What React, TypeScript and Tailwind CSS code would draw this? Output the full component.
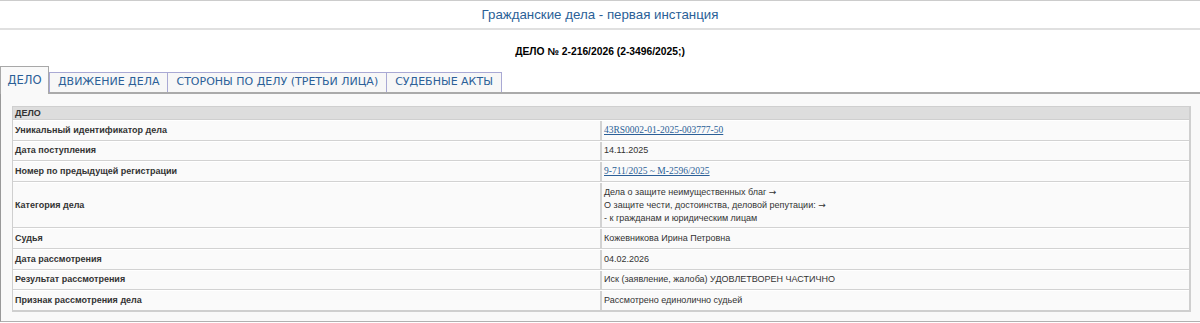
import React from "react";

const Arrow = () => <span className="font-['DejaVu_Sans',sans-serif] text-[9px]">→</span>;

const rows: { label: string; value: React.ReactNode }[] = [
  {
    label: "Уникальный идентификатор дела",
    value: (
      <a href="#" className="text-[#2b5f97] underline font-['Liberation_Serif',serif] text-[9.5px]">
        43RS0002-01-2025-003777-50
      </a>
    ),
  },
  { label: "Дата поступления", value: "14.11.2025" },
  {
    label: "Номер по предыдущей регистрации",
    value: (
      <a href="#" className="text-[#2b5f97] underline font-['Liberation_Serif',serif] text-[9.5px]">
        9-711/2025 ~ М-2596/2025
      </a>
    ),
  },
  {
    label: "Категория дела",
    value: (
      <div className="flex flex-col">
        <span>
          Дела о защите неимущественных благ <Arrow />
        </span>
        <span>
          О защите чести, достоинства, деловой репутации: <Arrow />
        </span>
        <span>- к гражданам и юридическим лицам</span>
      </div>
    ),
  },
  { label: "Судья", value: "Кожевникова Ирина Петровна" },
  { label: "Дата рассмотрения", value: "04.02.2026" },
  { label: "Результат рассмотрения", value: "Иск (заявление, жалоба) УДОВЛЕТВОРЕН ЧАСТИЧНО" },
  { label: "Признак рассмотрения дела", value: "Рассмотрено единолично судьей" },
];

export default function App() {
  return (
    <div className="w-[1200px] h-[323px] bg-white font-['Liberation_Sans',Arial,sans-serif] overflow-hidden">
      <div className="border-t border-[#cccccc] border-b-2 border-b-[#e0e0e0] h-[30px] flex items-center justify-center">
        <span className="text-[13.3px] text-[#2b5f97] leading-[16px]">Гражданские дела - первая инстанция</span>
      </div>
      <div className="h-[36px] flex items-center justify-center">
        <span className="text-[10.3px] font-bold text-black leading-[13px] mt-[7px]">ДЕЛО № 2-216/2026 (2-3496/2025;)</span>
      </div>
      <div className="flex items-end h-[26px] font-['DejaVu_Sans',Verdana,sans-serif] text-[11px] text-[#2b5f97]">
        <div className="relative z-10 h-[28px] -mb-[2px] w-[49px] bg-[#f9f9f9] border-l border-t border-r border-[#a8a8a8] flex items-start pt-[5px] justify-center text-[11.6px]">
          ДЕЛО
        </div>
        <div className="h-[20px] px-[8px] bg-[#f7f7f7] border border-b-0 border-[#a9a9d4] flex items-center">ДВИЖЕНИЕ ДЕЛА</div>
        <div className="h-[20px] px-[8px] bg-[#f7f7f7] border border-l-0 border-b-0 border-[#a9a9d4] flex items-center">СТОРОНЫ ПО ДЕЛУ (ТРЕТЬИ ЛИЦА)</div>
        <div className="h-[20px] px-[8px] bg-[#f7f7f7] border border-l-0 border-b-0 border-[#a9a9d4] flex items-center">СУДЕБНЫЕ АКТЫ</div>
      </div>
      <div className="h-[230px] bg-[#f9f9f9] border-t-2 border-[#aaaaaa] border-l border-l-[#999999] border-b border-b-[#b0b0b0] pt-[12px] pl-[11px] pr-[9px]">
        <div className="border border-[#cfcfcf] border-r-2 border-b-2 bg-[#fafafa] text-[9px] text-[#333333]">
          <div className="bg-[#dddddd] h-[13px] leading-[13px] px-[2px] font-bold text-[#333333] border-b border-[#cfcfcf]">ДЕЛО</div>
          {rows.map((r, i) => (
            <div
              key={i}
              className={`grid grid-cols-[589px_1fr] border-t border-white ${i < rows.length - 1 ? "border-b border-b-[#d2d2d2]" : ""}`}
            >
              <div className="px-[2px] py-[2.8px] leading-[13px] font-bold text-[#333333] flex items-center border-r-2 border-[#d2d2d2]">
                {r.label}
              </div>
              <div className="px-[2px] py-[2.8px] leading-[13px] flex items-center">{r.value}</div>
            </div>
          ))}
        </div>
      </div>
    </div>
  );
}
